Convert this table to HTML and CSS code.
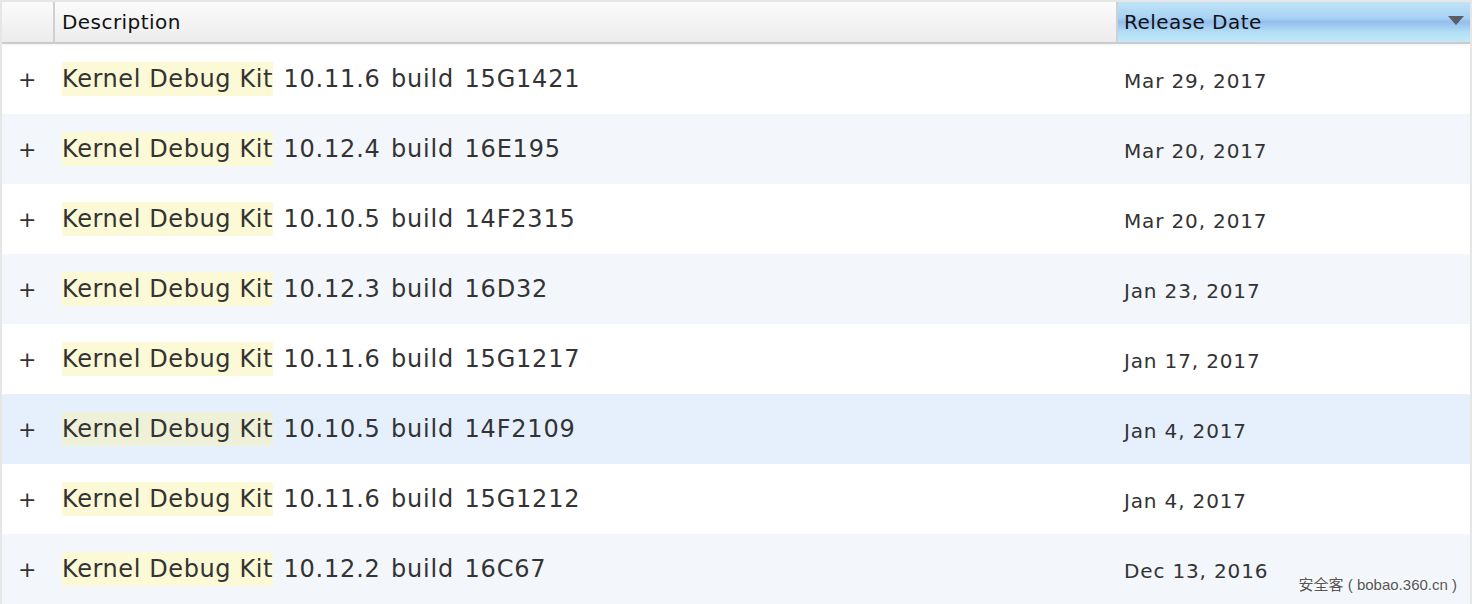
FILE: index.html
```html
<!DOCTYPE html>
<html>
<head>
<meta charset="utf-8">
<link rel="stylesheet" href="styles.css">
</head>
<body>
<div class="frame">
  <div class="table">
    <div class="header">
      <div class="h-cell h-toggle"></div>
      <div class="h-cell h-desc">Description</div>
      <div class="h-cell h-date">Release Date<span class="sort-arrow"></span></div>
    </div>
    <div class="row">
      <div class="c-toggle">+</div>
      <div class="c-desc"><span class="hl">Kernel Debug Kit</span> 10.11.6 build 15G1421</div>
      <div class="c-date">Mar 29, 2017</div>
    </div>
    <div class="row alt">
      <div class="c-toggle">+</div>
      <div class="c-desc"><span class="hl">Kernel Debug Kit</span> 10.12.4 build 16E195</div>
      <div class="c-date">Mar 20, 2017</div>
    </div>
    <div class="row">
      <div class="c-toggle">+</div>
      <div class="c-desc"><span class="hl">Kernel Debug Kit</span> 10.10.5 build 14F2315</div>
      <div class="c-date">Mar 20, 2017</div>
    </div>
    <div class="row alt">
      <div class="c-toggle">+</div>
      <div class="c-desc"><span class="hl">Kernel Debug Kit</span> 10.12.3 build 16D32</div>
      <div class="c-date">Jan 23, 2017</div>
    </div>
    <div class="row">
      <div class="c-toggle">+</div>
      <div class="c-desc"><span class="hl">Kernel Debug Kit</span> 10.11.6 build 15G1217</div>
      <div class="c-date">Jan 17, 2017</div>
    </div>
    <div class="row hover">
      <div class="c-toggle">+</div>
      <div class="c-desc"><span class="hl">Kernel Debug Kit</span> 10.10.5 build 14F2109</div>
      <div class="c-date">Jan 4, 2017</div>
    </div>
    <div class="row">
      <div class="c-toggle">+</div>
      <div class="c-desc"><span class="hl">Kernel Debug Kit</span> 10.11.6 build 15G1212</div>
      <div class="c-date">Jan 4, 2017</div>
    </div>
    <div class="row alt">
      <div class="c-toggle">+</div>
      <div class="c-desc"><span class="hl">Kernel Debug Kit</span> 10.12.2 build 16C67</div>
      <div class="c-date">Dec 13, 2016</div>
    </div>
  </div>
  <div class="watermark">安全客 ( bobao.360.cn )</div>
</div>
</body>
</html>
```
FILE: styles.css
```css
html, body {
  margin: 0;
  padding: 0;
  background: #e6e6e6;
}
body {
  width: 1472px;
  height: 604px;
  overflow: hidden;
  font-family: "DejaVu Sans", "Liberation Sans", sans-serif;
}
.frame {
  position: relative;
  padding: 2px 2px 0 2px;
  height: 602px;
}
.table {
  background: #fff;
  height: 602px;
  overflow: hidden;
}
.header {
  display: flex;
  height: 40px;
  background: linear-gradient(#fbfbfb, #ececec);
  border-bottom: 2px solid #cbcbcb;
  box-shadow: 0 1px 3px rgba(0,0,0,0.06);
  position: relative;
  z-index: 1;
}
.h-cell {
  display: flex;
  align-items: center;
  font-size: 20px;
  color: #111;
  letter-spacing: 0.45px;
}
.h-toggle {
  width: 51px;
  border-right: 2px solid #d0d0d0;
}
.h-desc {
  flex: 1;
  padding-left: 7px;
  border-right: 2px solid #d0d0d0;
}
.h-date {
  width: 346px;
  padding-left: 6px;
  background: linear-gradient(#bfe4f6 0%, #a8d2f3 40%, #93bdee 50%, #b3def5 75%, #c2e8f8 100%);
  position: relative;
}
.sort-arrow {
  position: absolute;
  right: 6px;
  top: 14px;
  width: 0;
  height: 0;
  border-left: 8px solid transparent;
  border-right: 8px solid transparent;
  border-top: 9px solid #5a5d62;
}
.row {
  display: flex;
  align-items: center;
  height: 70px;
  background: #fff;
  color: #333;
}
.row.alt { background: #f3f6fa; }
.row.hover { background: #e6f0fd; }
.c-toggle {
  width: 53px;
  padding-left: 16px;
  box-sizing: border-box;
  font-size: 22px;
  color: #333;
}
.c-desc {
  flex: 1;
  padding-left: 7px;
  font-size: 24px;
  letter-spacing: 0.8px;
  word-spacing: 2px;
}
.hl {
  background: #fcf9d6;
  padding: 3px 0 3px;
  letter-spacing: 0.6px;
  word-spacing: 0;
}
.row.hover .hl { background: #eef1d8; }
.c-date {
  width: 346px;
  padding-left: 6px;
  padding-top: 3px;
  font-size: 20px;
  letter-spacing: 0.85px;
}
.watermark {
  position: absolute;
  right: 15px;
  bottom: 10px;
  font-size: 15px;
  color: #555;
  font-family: "Liberation Sans", "Noto Sans CJK SC", sans-serif;
  text-shadow: 0 0 2px #fff, 0 0 2px #fff;
}
```
